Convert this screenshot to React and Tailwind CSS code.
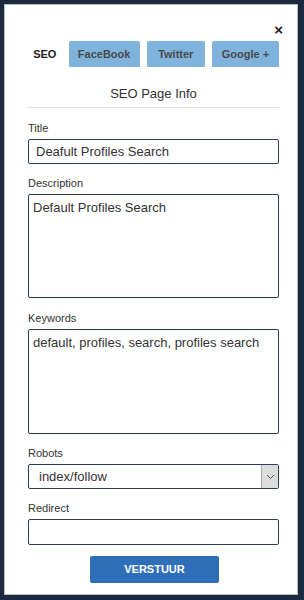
import React from 'react';

function Label({ children }) {
    return <label className="block text-[11px] leading-[13px] text-[#333] mb-[4px]">{children}</label>;
}

export default function App() {
    return (
        <div className="w-[304px] h-[600px] bg-[#1b2a3f] pt-[4px] pl-[4px] font-['Liberation_Sans',Arial,sans-serif]">
            <div className="w-[294px] h-[591px] bg-white border border-[#bbb] pl-[23px] pr-[18px] relative">
                <button className="absolute right-[14px] top-[17px] text-[15px] font-bold text-[#222] leading-none">×</button>

                <div className="flex gap-[7px] mt-[36px] h-[26px]">
                    <div className="w-[34px] flex items-center justify-center text-[11px] font-semibold text-[#222]">SEO</div>
                    <div className="w-[72px] bg-[#7fb3dc] rounded-t-[2px] flex items-center justify-center text-[11px] font-semibold text-[#4a4a4a]">FaceBook</div>
                    <div className="w-[59px] bg-[#7fb3dc] rounded-t-[2px] flex items-center justify-center text-[11px] font-semibold text-[#4a4a4a]">Twitter</div>
                    <div className="w-[68px] bg-[#7fb3dc] rounded-t-[2px] flex items-center justify-center text-[11px] font-semibold text-[#4a4a4a]">Google +</div>
                </div>

                <div className="mt-[19px] text-center text-[13px] text-[#333] leading-[16px]">SEO Page Info</div>
                <div className="mt-[5px] border-t border-[#ddd]"></div>

                <div className="mt-[14px]">
                    <Label>Title</Label>
                    <div className="h-[25px] border border-[#2c3d5a] rounded-[2px] px-[7px] flex items-center text-[13px] text-[#333]">Deafult Profiles Search</div>
                </div>

                <div className="mt-[13px]">
                    <Label>Description</Label>
                    <div className="h-[104px] border border-[#2c3d5a] rounded-[2px] px-[4px] pt-[5px] text-[13px] leading-[16px] text-[#333]">Default Profiles Search</div>
                </div>

                <div className="mt-[14px]">
                    <Label>Keywords</Label>
                    <div className="h-[105px] border border-[#2c3d5a] rounded-[2px] px-[4px] pt-[5px] text-[13px] leading-[16px] text-[#333]">default, profiles, search, profiles search</div>
                </div>

                <div className="mt-[13px]">
                    <Label>Robots</Label>
                    <div className="h-[25px] border border-[#2c3d5a] rounded-[2px] flex items-stretch text-[13px] text-[#333]">
                        <div className="flex-1 flex items-center pl-[10px]">index/follow</div>
                        <div className="w-[17px] bg-[#ddd] border-l border-[#aaa] flex items-center justify-center">
                            <svg width="9" height="6" viewBox="0 0 9 6"><path d="M1 1l3.5 3.5L8 1" fill="none" stroke="#555" strokeWidth="1" /></svg>
                        </div>
                    </div>
                </div>

                <div className="mt-[13px]">
                    <Label>Redirect</Label>
                    <div className="h-[26px] border border-[#2c3d5a] rounded-[2px]"></div>
                </div>

                <div className="mt-[11px] flex justify-center pl-[2px]">
                    <button className="w-[129px] h-[27px] bg-[#2f6fb8] rounded-[2px] text-white text-[11px] font-bold">VERSTUUR</button>
                </div>
            </div>
        </div>
    );
}
